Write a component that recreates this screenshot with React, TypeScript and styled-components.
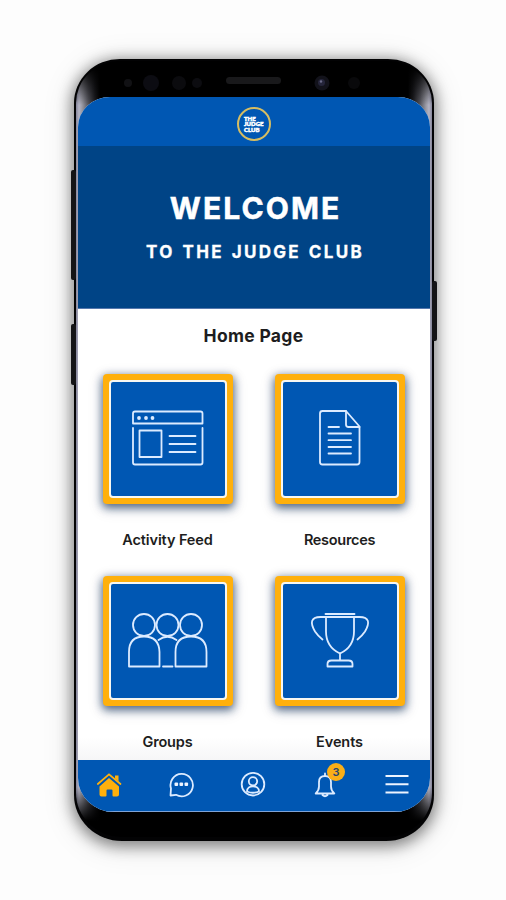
import React from 'react';
import styled, { createGlobalStyle } from 'styled-components';

const BLUE = '#0057b3';
const NAVY = '#004486';
const GOLD = '#ffb00c';

const GlobalStyle = createGlobalStyle`
  * { box-sizing: border-box; }
  body { margin: 0; background: #fdfdfd; font-family: 'Inter', sans-serif; }
`;

const Stage = styled.main`
  width: 506px;
  height: 900px;
  overflow: hidden;
  padding: 59px 0 0 74px;
  background: #fdfdfd;
`;

const Phone = styled.div`
  position: relative;
  width: 360px;
  height: 782px;
  padding: 2px 2px 0 2px;
  border-radius: 46px 46px 48px 48px / 44px 44px 46px 46px;
  background: #030304;
  box-shadow: 0 3px 14px 3px rgba(0, 0, 0, 0.42), 0 4px 30px 4px rgba(0, 0, 0, 0.1);
`;

const SideButton = styled.div<{ $side: 'left' | 'right'; $top: number; $height: number }>`
  position: absolute;
  ${(p) => p.$side}: -3px;
  top: ${(p) => p.$top}px;
  width: 5px;
  height: ${(p) => p.$height}px;
  border-radius: 2px;
  background: #141416;
`;

const Glass = styled.div`
  position: relative;
  height: 776px;
  padding: 0 2px;
  border-radius: 44px 44px 46px 46px / 42px 42px 44px 44px;
  overflow: hidden;
  background:
    linear-gradient(#000, #000) 24px 0 / 308px 100% no-repeat,
    linear-gradient(180deg, #000 6px, transparent 44px, transparent 726px, #000 760px),
    linear-gradient(90deg, #85859a 0, #b4b4c4 3px, #9a9aa4 6px, #55555d 12px, #1b1b1f 19px, #000 24px, #000 332px, #1b1b1f 337px, #55555d 344px, #9a9aa4 350px, #b4b4c4 353px, #85859a 356px);
`;

const TopBezel = styled.div`
  height: 36px;
`;

const Screen = styled.div`
  display: flex;
  flex-direction: column;
  height: 715px;
  border-radius: 32px 32px 36px 36px / 30px 30px 34px 34px;
  overflow: hidden;
  background: #fff;
`;

const Header = styled.header`
  display: flex;
  justify-content: center;
  align-items: center;
  height: 49px;
  padding-top: 5px;
  background: ${BLUE};
`;

const Logo = styled.div`
  display: flex;
  flex-direction: column;
  justify-content: center;
  width: 34px;
  height: 34px;
  padding-left: 5px;
  border: 2px solid #d6bd62;
  border-radius: 50%;
  color: #fff;
  font: 900 6px/5.6px 'Lato', sans-serif;
  -webkit-text-stroke: 0.5px #fff;
`;

const Banner = styled.section`
  height: 163px;
  border-bottom: 1px solid #5578ad;
  background: ${NAVY};
  color: #fff;
  text-align: center;
`;

const Title = styled.h1`
  margin: 44px 0 0 3px;
  font: 700 30px/36px 'Inter', sans-serif;
  letter-spacing: 2.1px;
  -webkit-text-stroke: 0.5px #fff;
`;

const Subtitle = styled.p`
  margin: 15px 0 0 2px;
  font: 700 17px/22px 'Inter', sans-serif;
  letter-spacing: 2.3px;
  word-spacing: 1.6px;
  -webkit-text-stroke: 0.3px #fff;
`;

const Content = styled.section`
  flex: 1;
  min-height: 0;
  overflow: hidden;
  color: #1d1d20;
  background: linear-gradient(#fff 95%, #f6f6f7);
`;

const PageTitle = styled.h2`
  height: 64.5px;
  margin: 0 1px 0 0;
  padding-top: 15px;
  font: 700 17.5px/24px 'Inter', sans-serif;
  letter-spacing: 0.3px;
  text-align: center;
`;

const Grid = styled.div`
  display: grid;
  grid-template-columns: 172px 172px;
  grid-auto-rows: 202.5px;
  padding: 0 4px;
`;

const Cell = styled.div`
  display: flex;
  flex-direction: column;
  align-items: center;
`;

const Tile = styled.div`
  width: 130px;
  height: 130px;
  padding: 6px;
  border-radius: 4px;
  background: ${GOLD};
  box-shadow: 0 3px 8px 1px rgba(10, 40, 80, 0.65), 0 4px 15px 1px rgba(10, 40, 80, 0.15);
`;

const TileFace = styled.div`
  display: flex;
  width: 118px;
  height: 118px;
  border: 2px solid #f7f7f2;
  border-radius: 4px;
  background: ${BLUE};
`;

const Label = styled.div<{ $track: number }>`
  margin: 25px 1px 0 0;
  font: 600 14.5px/22px 'Inter', sans-serif;
  letter-spacing: ${(p) => p.$track}px;
  white-space: nowrap;
`;

const Nav = styled.nav`
  display: grid;
  grid-template-columns: repeat(5, 72px);
  justify-content: center;
  height: 52px;
  padding: 10px 2px 0 0;
  border-bottom: 1px solid #7fa3d6;
  background: ${BLUE};
`;

const NavItem = styled.div`
  position: relative;
  display: flex;
  justify-content: center;
`;

const Badge = styled.span`
  position: absolute;
  left: 38px;
  top: -7px;
  width: 18px;
  height: 18px;
  border-radius: 50%;
  background: #f9ae18;
  color: #26446f;
  font: 600 11px/18px 'Inter', sans-serif;
  text-align: center;
`;

const line = { fill: 'none', stroke: '#dcebff', strokeWidth: 1.8, strokeLinecap: 'round', strokeLinejoin: 'round' } as const;

/* Tile drawings share a 114px square that fills the blue face. */
const FeedIcon = () => (
  <svg width="114" height="114" {...line}>
    <path d="M22 41.500V31.500q0-2 2-2h65.500q2 0 2 2v10zM22 46v34.500q0 2 2 2h65.500q2 0 2-2V46" />
    <rect x="28.500" y="48.500" width="22" height="26.500" />
    <path d="M58.500 54h26M58.500 62h26M58.500 70h26" />
    <g fill="#dcebff" stroke="none">
      <circle cx="28" cy="36" r="1.900" />
      <circle cx="35" cy="36" r="1.900" />
      <circle cx="41.500" cy="36" r="1.900" />
    </g>
  </svg>
);

const DocumentIcon = () => (
  <svg width="114" height="114" {...line}>
    <path d="M63 29H39.500q-2.500 0-2.500 2.500V80q0 2.500 2.500 2.500h34.500q2.500 0 2.500-2.500V44.500z" />
    <path d="M63 29v13.500q0 2.500 2.500 2.500h11M45.500 45H56M45.500 51.500h22.500M45.500 58.200h22.500M45.500 65h22.500M45.500 71.500h22.500" />
  </svg>
);

const GroupsIcon = () => (
  <svg width="114" height="114" {...line}>
    <circle cx="33" cy="41" r="11" />
    <circle cx="56.500" cy="41" r="11" />
    <circle cx="80" cy="41" r="11" />
    <path d="M18 82.500V68q0-15.500 15-15.500T48.500 68v14.500zM64.500 82.500V68q0-15.500 15.500-15.500T95.500 68v14.500zM47.500 56q9-6.500 18 0M52 82.500h9.500" />
  </svg>
);

const TrophyIcon = () => (
  <svg width="114" height="114" {...line}>
    <path d="M42.500 30h29M42.500 33h29M43 33v14.500Q43 63 57 69.500Q71 63 71 47.500V33M57 69.500v6.500" />
    <path d="M43 33H37.500c-10 0-10.500 6-5.500 14.500q3 4.500 7.500 8M71 33H76.500c10 0 10.500 6 5.500 14.500q-3 4.500-7.500 8" />
    <path d="M48.500 76.500h17q4 0 4 3.500v2.500H44.500v-2.500q0-3.500 4-3.500z" />
  </svg>
);

const HomeIcon = () => (
  <svg width="28" height="28" fill={GOLD}>
    <path d="M14 8 24 16.500V24.500q0 2-2 2h-3.500q-1 0-1-1V20.500q0-1-1-1h-4q-1 0-1 1v5q0 1-1 1H6.500q-2 0-2-2V16.500z" />
    <path d="M20 5.500h3.500v6l-3.500-3z" />
    <path d="M2.800 14 14 4.300 25.500 14" fill="none" stroke={GOLD} strokeWidth="1.700" strokeLinecap="round" />
  </svg>
);

const ChatIcon = () => (
  <svg width="28" height="28" {...line}>
    <path d="M3.500 25.500 4 18.500A11.200 11.200 0 1 1 9 24.800L3.500 25.500z" />
    <g fill="#edf4ff" stroke="none">
      <rect x="7.500" y="12.500" width="3.600" height="3.400" rx="1" />
      <rect x="12.500" y="12.500" width="3.600" height="3.400" rx="1" />
      <rect x="17.500" y="12.500" width="3.600" height="3.400" rx="1" />
    </g>
  </svg>
);

const ProfileIcon = () => (
  <svg width="28" height="28" {...line}>
    <circle cx="14" cy="14.200" r="11.300" />
    <circle cx="14" cy="11.300" r="4.200" />
    <path d="M8 21.500c0-7 12-7 12 0q-6 2.500-12 0z" />
  </svg>
);

const BellIcon = () => (
  <svg width="28" height="28" {...line}>
    <path d="M14 3.500v2M4.700 23.500q3.300-3 3.300-7v-4.500q0-6 6-6t6 6v4.500q0 4 3.300 7zM11.500 25q2.500 2.400 5 0" />
  </svg>
);

const MenuIcon = () => (
  <svg width="28" height="28" fill="none" stroke="#edf4ff" strokeWidth="2">
    <path d="M2.500 6h23M2.500 14.300h23M2.500 22.500h23" />
  </svg>
);

const Sensors = styled.svg`
  position: absolute;
  left: 0;
  top: -2px;
`;

const tiles = [
  { label: 'Activity Feed', track: -0.1, Icon: FeedIcon },
  { label: 'Resources', track: -0.3, Icon: DocumentIcon },
  { label: 'Groups', track: -0.2, Icon: GroupsIcon },
  { label: 'Events', track: -0.1, Icon: TrophyIcon },
];

const navItems = [
  { id: 'home', Icon: HomeIcon },
  { id: 'chat', Icon: ChatIcon },
  { id: 'profile', Icon: ProfileIcon },
  { id: 'alerts', Icon: BellIcon, badge: 3 },
  { id: 'menu', Icon: MenuIcon },
];

export default function App() {
  return (
    <>
      <GlobalStyle />
      <Stage>
        <Phone>
          <SideButton $side="left" $top={111} $height={110} />
          <SideButton $side="left" $top={265} $height={61} />
          <SideButton $side="right" $top={222} $height={60} />
          <Glass>
            <Sensors width="354" height="38">
              <circle cx="52" cy="24" r="4" fill="#111114" />
              <circle cx="75" cy="24" r="8" fill="#0c0c12" />
              <circle cx="103" cy="24" r="7" fill="#0b0b0e" />
              <circle cx="121" cy="24" r="5" fill="#0c0c10" />
              <rect x="150" y="18" width="55" height="7" rx="3.500" fill="#19191b" />
              <circle cx="246" cy="24" r="7.500" fill="#12121a" />
              <circle cx="245.500" cy="23.500" r="3.500" fill="#25253a" />
              <circle cx="245" cy="22.500" r="1.200" fill="#6a6a88" />
              <circle cx="278" cy="24" r="6" fill="#09090b" />
            </Sensors>
            <TopBezel />
            <Screen>
              <Header>
                <Logo>
                  <span>THE</span>
                  <span>JUDGE</span>
                  <span>CLUB</span>
                </Logo>
              </Header>
              <Banner>
                <Title>WELCOME</Title>
                <Subtitle>TO THE JUDGE CLUB</Subtitle>
              </Banner>
              <Content>
                <PageTitle>Home Page</PageTitle>
                <Grid>
                  {tiles.map(({ label, track, Icon }) => (
                    <Cell key={label}>
                      <Tile>
                        <TileFace>
                          <Icon />
                        </TileFace>
                      </Tile>
                      <Label $track={track}>{label}</Label>
                    </Cell>
                  ))}
                </Grid>
              </Content>
              <Nav>
                {navItems.map(({ id, Icon, badge }) => (
                  <NavItem key={id}>
                    <Icon />
                    {badge && <Badge>{badge}</Badge>}
                  </NavItem>
                ))}
              </Nav>
            </Screen>
          </Glass>
        </Phone>
      </Stage>
    </>
  );
}
